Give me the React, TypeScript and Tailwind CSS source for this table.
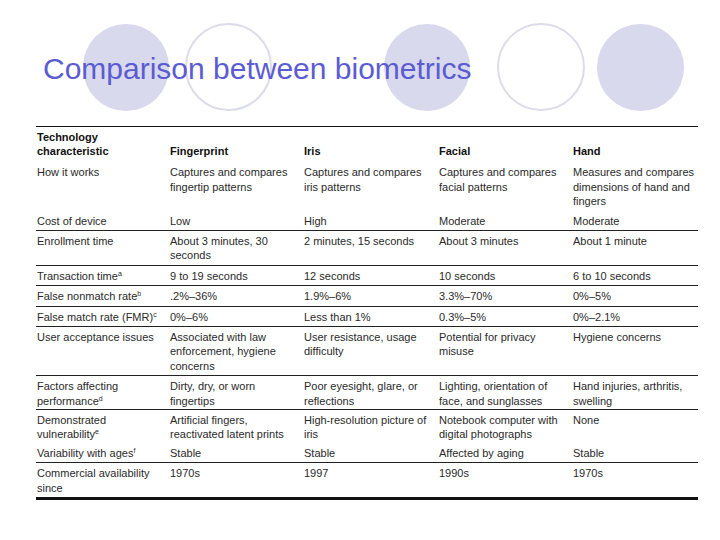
import React from "react";

type Row = {
  label: React.ReactNode;
  cells: React.ReactNode[];
  line?: boolean;
  bold?: boolean;
  pad?: string;
};

const Sup = ({ c }: { c: string }) => <sup className="text-[7px] top-[-4px]">{c}</sup>;

const rows: Row[] = [
  {
    label: (
      <>
        Technology
        <br />
        characteristic
      </>
    ),
    cells: [
      <><br />Fingerprint</>,
      <><br />Iris</>,
      <><br />Facial</>,
      <><br />Hand</>,
    ],
    bold: true,
    pad: "pt-[3px] pb-[3.5px]",
  },
  {
    label: "How it works",
    cells: [
      <>Captures and compares<br />fingertip patterns</>,
      <>Captures and compares<br />iris patterns</>,
      <>Captures and compares<br />facial patterns</>,
      <>Measures and compares<br />dimensions of hand and<br />fingers</>,
    ],
  },
  { label: "Cost of device", cells: ["Low", "High", "Moderate", "Moderate"], line: true },
  {
    label: "Enrollment time",
    cells: [<>About 3 minutes, 30<br />seconds</>, "2 minutes, 15 seconds", "About 3 minutes", "About 1 minute"],
    line: true,
  },
  {
    label: <>Transaction time<Sup c="a" /></>,
    cells: ["9 to 19 seconds", "12 seconds", "10 seconds", "6 to 10 seconds"],
    line: true,
  },
  {
    label: <>False nonmatch rate<Sup c="b" /></>,
    cells: [".2%–36%", "1.9%–6%", "3.3%–70%", "0%–5%"],
    line: true,
  },
  {
    label: <>False match rate (FMR)<Sup c="c" /></>,
    cells: ["0%–6%", "Less than 1%", "0.3%–5%", "0%–2.1%"],
    line: true,
  },
  {
    label: "User acceptance issues",
    cells: [
      <>Associated with law<br />enforcement, hygiene<br />concerns</>,
      <>User resistance, usage<br />difficulty</>,
      <>Potential for privacy<br />misuse</>,
      "Hygiene concerns",
    ],
    line: true,
  },
  {
    label: <>Factors affecting<br />performance<Sup c="d" /></>,
    cells: [
      <>Dirty, dry, or worn<br />fingertips</>,
      <>Poor eyesight, glare, or<br />reflections</>,
      <>Lighting, orientation of<br />face, and sunglasses</>,
      <>Hand injuries, arthritis,<br />swelling</>,
    ],
    line: true,
    pad: "pt-[3px] pb-[1px]",
  },
  {
    label: <>Demonstrated<br />vulnerability<Sup c="e" /></>,
    cells: [
      <>Artificial fingers,<br />reactivated latent prints</>,
      <>High-resolution picture of<br />iris</>,
      <>Notebook computer with<br />digital photographs</>,
      "None",
    ],
    pad: "pt-[3px] pb-[1px]",
  },
  {
    label: <>Variability with ages<Sup c="f" /></>,
    cells: ["Stable", "Stable", "Affected by aging", "Stable"],
    line: true,
  },
  {
    label: <>Commercial availability<br />since</>,
    cells: ["1970s", "1997", "1990s", "1970s"],
  },
];

export default function App() {
  return (
    <div className="relative w-[720px] h-[540px] bg-white overflow-hidden font-['Liberation_Sans',Arial,sans-serif]">
      {/* decorative circles */}
      <div className="absolute left-[83px] top-[24px] w-[86px] h-[87px] rounded-full bg-[#d9d9ee]" />
      <div className="absolute left-[185px] top-[23px] w-[87px] h-[88px] rounded-full border-2 border-[#dcdcea]" />
      <div className="absolute left-[384px] top-[24px] w-[86px] h-[87px] rounded-full bg-[#d9d9ee]" />
      <div className="absolute left-[497px] top-[23px] w-[88px] h-[88px] rounded-full border-2 border-[#dcdcea]" />
      <div className="absolute left-[597px] top-[24px] w-[87px] h-[87px] rounded-full bg-[#d9d9ee]" />

      <div className="relative">
        <h1 className="pt-[52px] pl-[43px] text-[30px] leading-[34px] text-[#5b5bd3] font-normal">
          Comparison between biometrics
        </h1>

        <div className="mt-[40px] ml-[36px] w-[662px] border-t-[1.5px] border-[#111] text-[11px] leading-[14.4px] text-[#2a2a2a]">
          {rows.map((r, i) => (
            <div
              key={i}
              className={`grid grid-cols-[134px_134px_135px_134px_1fr] ${r.pad ?? "pt-[3px] pb-[2px]"} ${
                r.line ? "border-b border-[#222]" : ""
              } ${r.bold ? "font-bold text-[#111]" : ""}`}
            >
              <div className="pl-[1px] whitespace-nowrap">{r.label}</div>
              {r.cells.map((c, j) => (
                <div key={j} className="whitespace-nowrap">
                  {c}
                </div>
              ))}
            </div>
          ))}
          <div className="h-[3px] bg-[#111]" />
        </div>
      </div>
    </div>
  );
}
